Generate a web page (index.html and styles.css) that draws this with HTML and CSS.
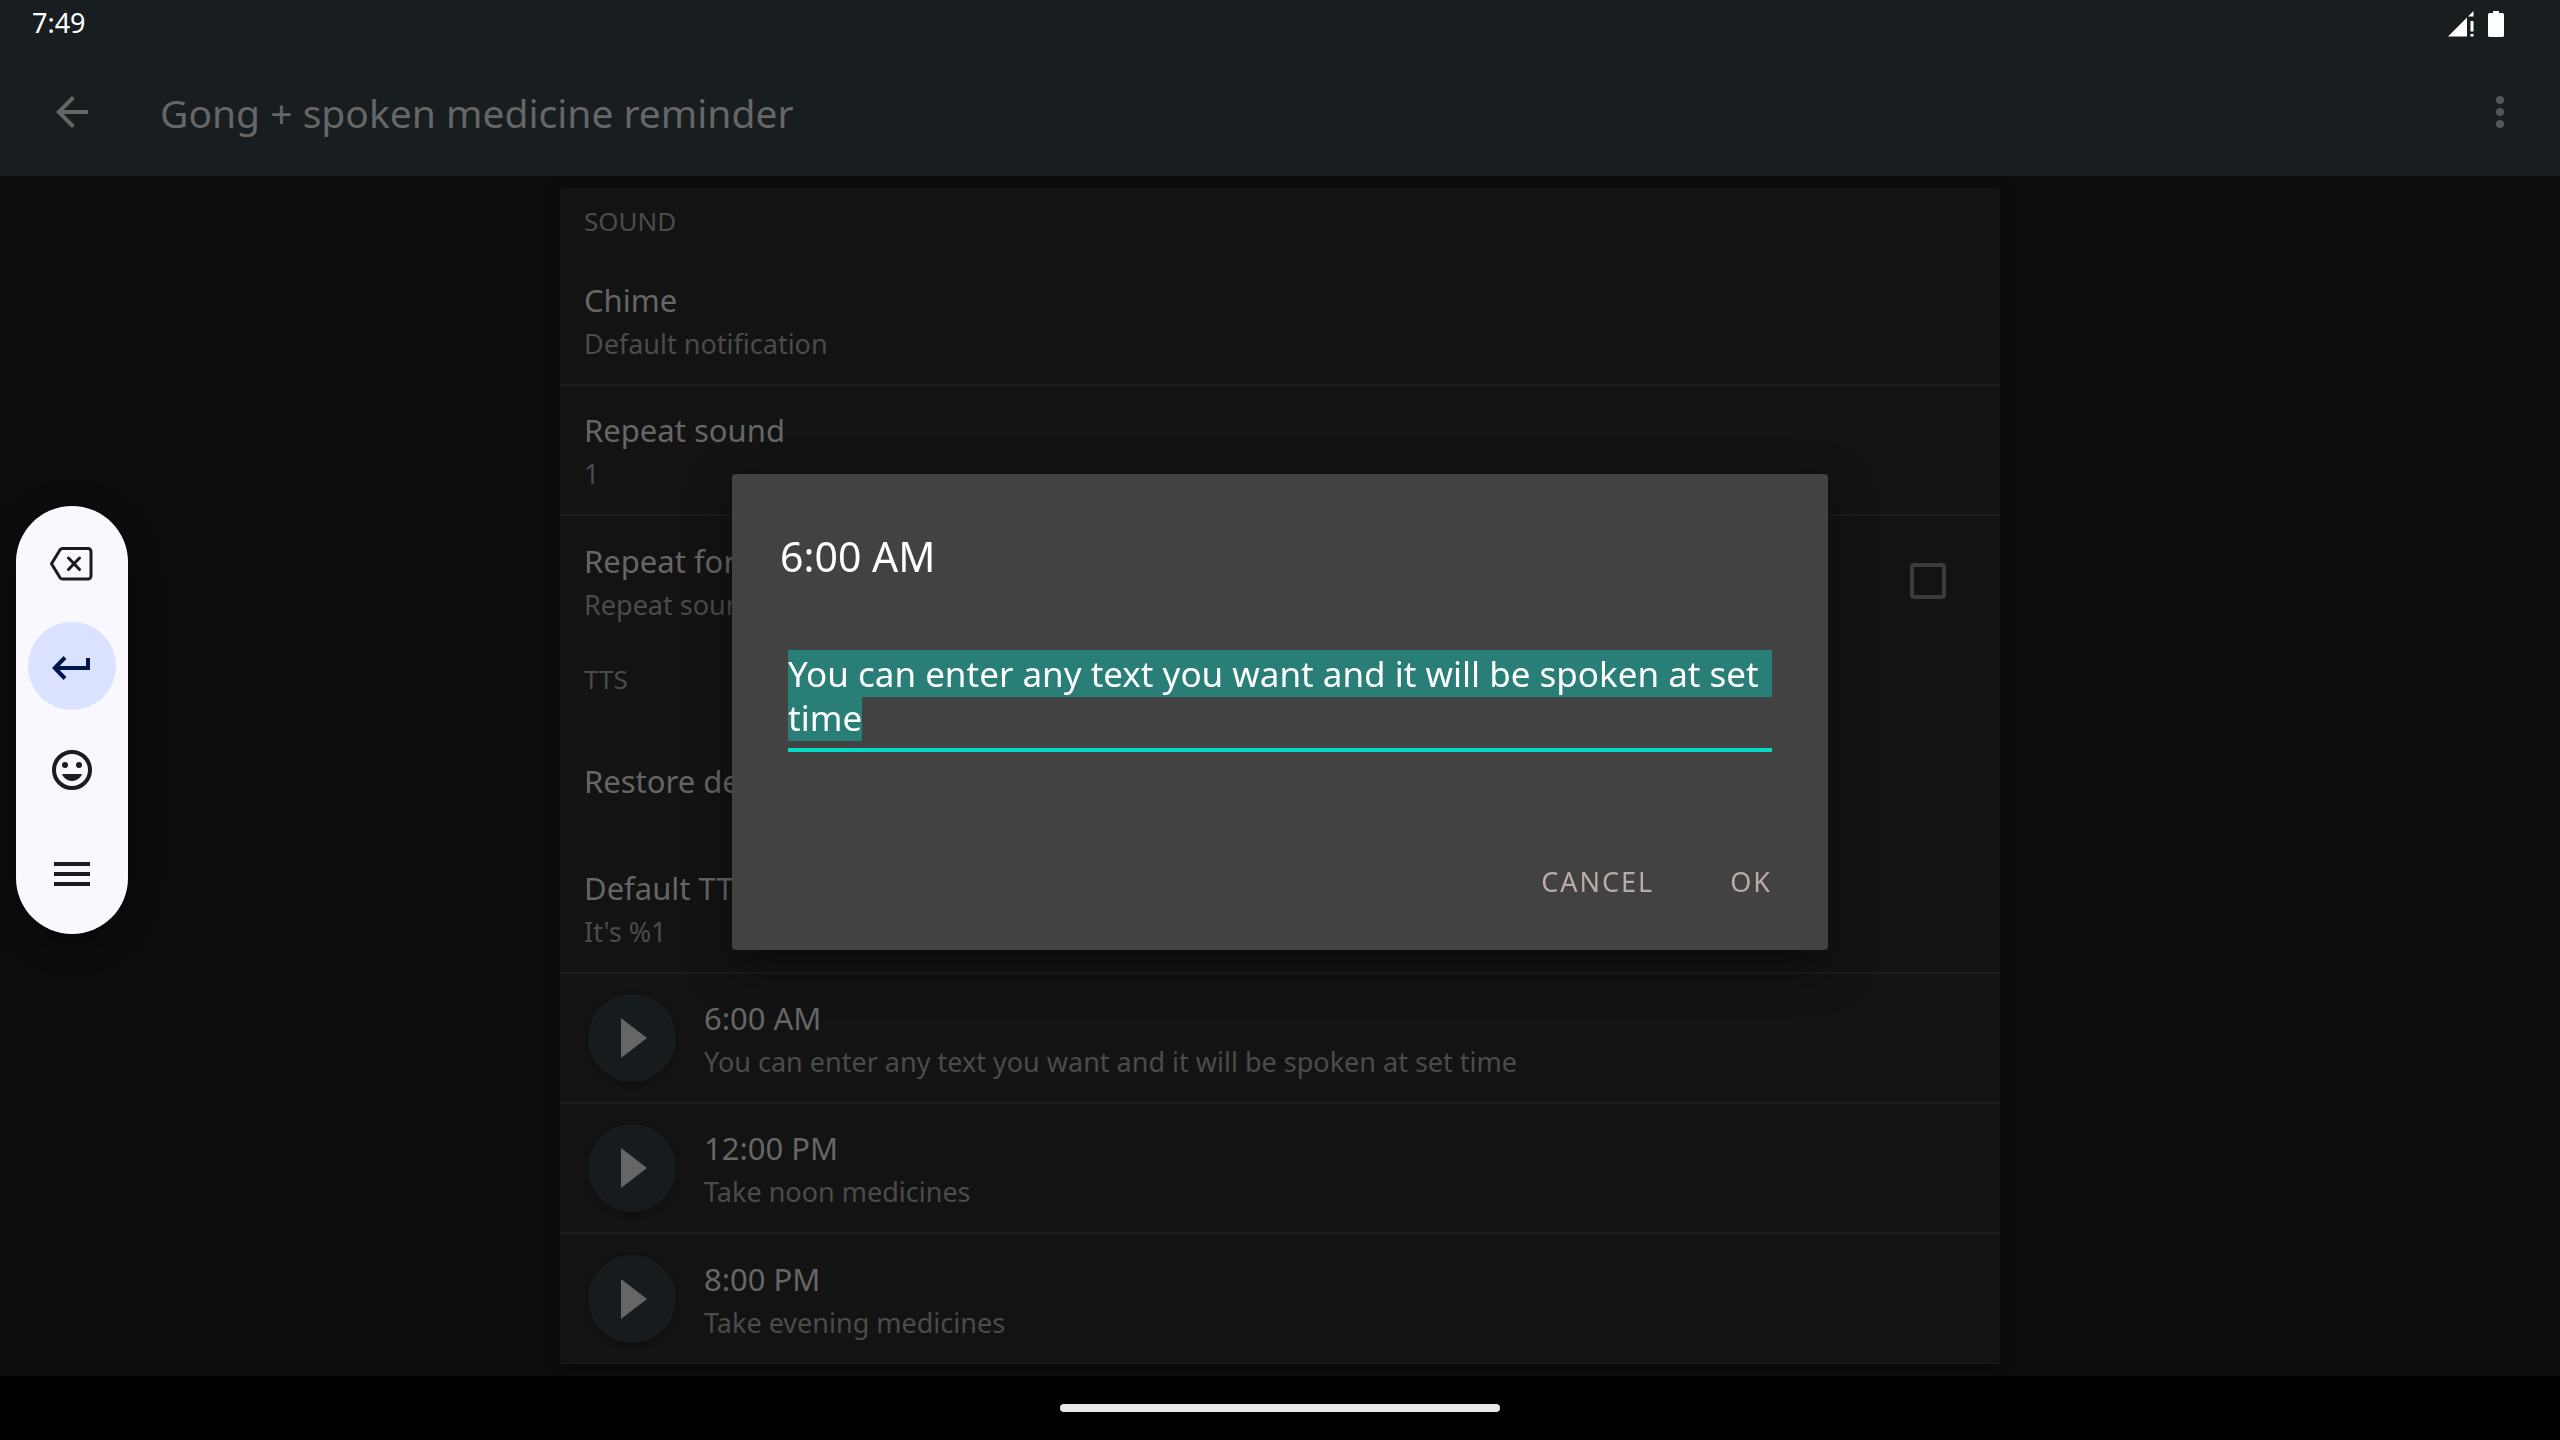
FILE: index.html
```html
<!DOCTYPE html>
<html lang="en">
<head>
    <meta charset="UTF-8">
    <meta name="viewport" content="width=device-width, initial-scale=1.0">
    <title>Gong + spoken medicine reminder</title>
    <link rel="stylesheet" href="styles.css">
</head>
<body>
    <header class="top">
        <div class="status-bar">
            <span class="clock">7:49</span>
            <div class="status-icons">
                <svg width="26" height="26" viewBox="0 0 26 26" fill="#fff">
                    <path d="M0 25.500L19 6.500V25.500zM20 5.500L25.500 0V5.500zM22.500 10H25.500V20.500H22.500zM22.500 23H25.500V25.500H22.500z"/>
                </svg>
                <svg width="16" height="26" viewBox="0 0 16 26" fill="#fff">
                    <path d="M5 0h6v2h3.500a1.500 1.500 0 0 1 1.500 1.500v21a1.500 1.500 0 0 1-1.500 1.500h-13A1.500 1.500 0 0 1 0 24.500v-21A1.500 1.500 0 0 1 1.500 2H5z"/>
                </svg>
            </div>
        </div>
        <div class="toolbar">
            <button class="icon-btn" aria-label="Back">
                <svg width="48" height="48" viewBox="0 0 24 24" fill="#666">
                    <path d="M20 11H7.830l5.590-5.590L12 4l-8 8 8 8 1.410-1.410L7.830 13H20v-2z"/>
                </svg>
            </button>
            <h1>Gong + spoken medicine reminder</h1>
            <button class="icon-btn" aria-label="More options">
                <svg width="48" height="48" viewBox="0 0 24 24" fill="#555">
                    <circle cx="12" cy="6" r="2"/>
                    <circle cx="12" cy="12" r="2"/>
                    <circle cx="12" cy="18" r="2"/>
                </svg>
            </button>
        </div>
    </header>

    <main>
        <div class="card">
            <h2>SOUND</h2>
            <div class="row divider">
                <div class="row-text">
                    <p class="primary">Chime</p>
                    <p class="secondary">Default notification</p>
                </div>
            </div>
            <div class="row divider">
                <div class="row-text">
                    <p class="primary">Repeat sound</p>
                    <p class="secondary">1</p>
                </div>
            </div>
            <div class="row">
                <label class="row-text" for="forever">
                    <span class="primary">Repeat forever</span>
                    <span class="secondary">Repeat sound</span>
                </label>
                <input type="checkbox" id="forever">
            </div>
            <h2>TTS</h2>
            <div class="row">
                <div class="row-text">
                    <p class="primary">Restore defaults</p>
                </div>
            </div>
            <div class="row divider">
                <div class="row-text">
                    <p class="primary">Default TTS</p>
                    <p class="secondary">It's %1</p>
                </div>
            </div>
            <div class="row divider">
                <button class="play" aria-label="Play 6:00 AM">
                    <svg width="26" height="40" viewBox="0 0 26 40" fill="#666"><path d="M0 0L26 20L0 40z"/></svg>
                </button>
                <div class="row-text">
                    <p class="primary">6:00 AM</p>
                    <p class="secondary">You can enter any text you want and it will be spoken at set time</p>
                </div>
            </div>
            <div class="row divider">
                <button class="play" aria-label="Play 12:00 PM">
                    <svg width="26" height="40" viewBox="0 0 26 40" fill="#666"><path d="M0 0L26 20L0 40z"/></svg>
                </button>
                <div class="row-text">
                    <p class="primary">12:00 PM</p>
                    <p class="secondary">Take noon medicines</p>
                </div>
            </div>
            <div class="row divider">
                <button class="play" aria-label="Play 8:00 PM">
                    <svg width="26" height="40" viewBox="0 0 26 40" fill="#666"><path d="M0 0L26 20L0 40z"/></svg>
                </button>
                <div class="row-text">
                    <p class="primary">8:00 PM</p>
                    <p class="secondary">Take evening medicines</p>
                </div>
            </div>
        </div>
    </main>

    <footer class="nav-bar">
        <div class="nav-handle"></div>
    </footer>

    <!-- Edit dialog -->
    <div class="overlay">
        <div class="dialog" role="dialog" aria-labelledby="dialog-title">
            <label class="dialog-title" id="dialog-title" for="message">6:00 AM</label>
            <textarea id="message" rows="2" spellcheck="false">You can enter any text you want and it will be spoken at set time</textarea>
            <div class="actions">
                <button>CANCEL</button>
                <button>OK</button>
            </div>
        </div>
    </div>

    <!-- Floating keyboard toolbar -->
    <div class="keyboard-bar">
        <button aria-label="Backspace">
            <svg width="48" height="48" viewBox="0 0 48 48" fill="none" stroke="#1b1b21" stroke-width="3" stroke-linejoin="round" stroke-linecap="round">
                <path d="M14.500 10.500H40a3 3 0 0 1 3 3V38a3 3 0 0 1-3 3H14.500a3 3 0 0 1-2.400-1.200L3.500 25.700l8.600-14a3 3 0 0 1 2.400-1.200z"/>
                <path d="M20.500 20L31.500 31.500M31.500 20L20.500 31.500"/>
            </svg>
        </button>
        <button class="active" aria-label="Enter">
            <svg width="48" height="48" viewBox="0 0 48 48" fill="none" stroke="#00174b" stroke-width="4">
                <path d="M40 16V26H7"/>
                <path d="M17 15.500L6.800 26L17 36.500"/>
            </svg>
        </button>
        <button aria-label="Emoji">
            <svg width="48" height="48" viewBox="0 0 48 48" fill="#1b1b21">
                <circle cx="24" cy="24" r="18" fill="none" stroke="#1b1b21" stroke-width="4"/>
                <circle cx="17" cy="19" r="3"/>
                <circle cx="31" cy="19" r="3"/>
                <path d="M14 28H34C32.500 32 28.500 35 24 35S15.500 32 14 28z"/>
            </svg>
        </button>
        <button aria-label="Menu">
            <svg width="48" height="48" viewBox="0 0 48 48" fill="#1b1b21">
                <path d="M6 12h36v4H6zM6 22h36v4H6zM6 32h36v4H6z"/>
            </svg>
        </button>
    </div>

    <script>
        const message = document.getElementById('message');
        message.focus();
        message.select();
    </script>
</body>
</html>
```
FILE: styles.css
```css
* {
    margin: 0;
    padding: 0;
    box-sizing: border-box;
    font-family: 'Noto Sans', sans-serif;
}

body {
    min-height: 100vh;
    display: flex;
    flex-direction: column;
    background: #0d0d0d;
    color: #666;
}

button {
    border: none;
    background: none;
    cursor: pointer;
}

svg {
    display: block;
}

.top {
    background: #181d20;
}

.status-bar {
    height: 48px;
    padding: 0 56px 0 32px;
    display: flex;
    align-items: center;
    justify-content: space-between;
}

.clock {
    font-size: 27px;
    line-height: 46px;
    padding-bottom: 2px;
    color: #fff;
}

.status-icons {
    display: flex;
    gap: 14px;
}

.toolbar {
    height: 128px;
    padding: 0 36px 0 48px;
    display: flex;
    align-items: center;
}

.toolbar h1 {
    flex: 1;
    padding-left: 64px;
    font-size: 39px;
    font-weight: 400;
}

main {
    flex: 1;
    padding: 12px;
}

.card {
    max-width: 1440px;
    margin: 0 auto;
    background: #131313;
    border-radius: 4px;
    box-shadow: 0 2px 12px rgba(0,0,0,0.5);
}

.card h2 {
    padding: 0 24px 2px;
    font-size: 26px;
    font-weight: 400;
    line-height: 66px;
    color: #4b4b4b;
}

.row {
    min-height: 130px;
    padding: 0 24px;
    display: flex;
    align-items: center;
}

.divider {
    border-bottom: 2px solid #1c1c1c;
}

.row:last-child {
    border-bottom-width: 1px;
}

.row-text {
    flex: 1;
    padding-top: 4px;
}

.primary,
.secondary {
    display: block;
    line-height: 44px;
}

.primary {
    font-size: 31px;
    color: #666;
}

.secondary {
    font-size: 27px;
    color: #4b4b4b;
}

input[type="checkbox"] {
    appearance: none;
    width: 36px;
    height: 36px;
    margin-right: 30px;
    border: 4px solid #3b3b3b;
    border-radius: 4px;
}

.play {
    width: 88px;
    height: 88px;
    margin: 0 28px 0 4px;
    padding-left: 33px;
    border-radius: 50%;
    background: #161b1e;
    box-shadow: 0 2px 6px rgba(0,0,0,0.3);
}

.nav-bar {
    height: 64px;
    display: flex;
    align-items: center;
    justify-content: center;
    background: #000;
}

.nav-handle {
    width: 440px;
    height: 8px;
    border-radius: 4px;
    background: #e9e9e9;
}

.overlay {
    position: fixed;
    inset: 48px 0 64px;
    display: flex;
    align-items: center;
    justify-content: center;
}

.dialog {
    width: 1096px;
    max-width: 90%;
    padding: 52px 56px 32px 48px;
    display: flex;
    flex-direction: column;
    background: #424242;
    border-radius: 4px;
    box-shadow: 0 16px 48px rgba(0,0,0,0.4);
}

.dialog-title {
    font-size: 41px;
    line-height: 60px;
    color: #fff;
}

textarea {
    height: 112px;
    margin: 54px 0 94px 8px;
    padding-top: 12px;
    border: none;
    border-bottom: 4px solid #00dac6;
    outline: none;
    resize: none;
    overflow: hidden;
    background: none;
    color: #fff;
    caret-color: transparent;
    font-size: 35px;
    line-height: 44px;
}

textarea::selection {
    background: #297f77;
    color: #fff;
}

.actions {
    display: flex;
    justify-content: flex-end;
    gap: 44px;
}

.actions button {
    padding: 0 0 0 32px;
    font-size: 27px;
    line-height: 72px;
    letter-spacing: 2px;
    color: #bcaaa4;
}

.keyboard-bar {
    position: fixed;
    left: 16px;
    top: 506px;
    padding: 12px 12px 16px;
    display: flex;
    flex-direction: column;
    gap: 16px;
    background: #faf8ff;
    border-radius: 56px;
    box-shadow: 0 8px 32px rgba(0,0,0,0.4);
}

.keyboard-bar button {
    width: 88px;
    height: 88px;
    padding: 20px;
    border-radius: 50%;
}

.keyboard-bar .active {
    background: #dae2ff;
}
```
